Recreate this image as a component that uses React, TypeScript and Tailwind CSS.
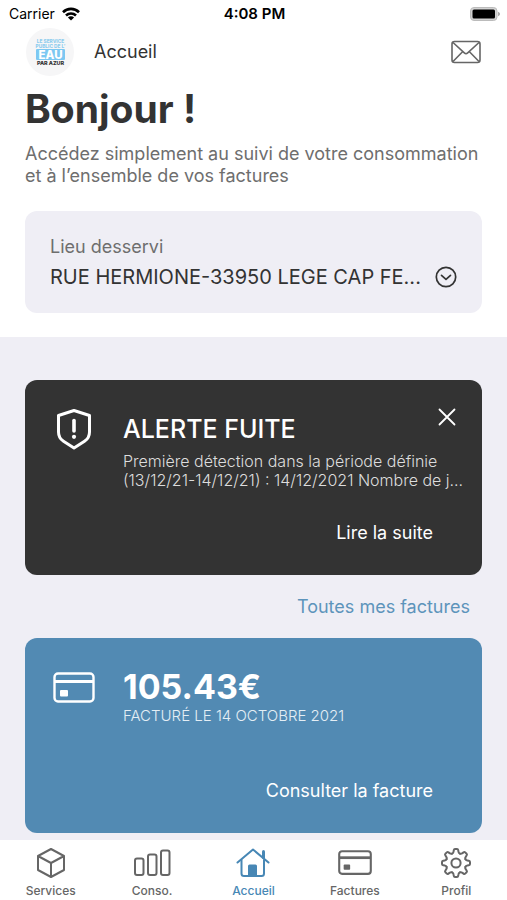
import type { ReactNode } from "react";

const WifiIcon = () => (
  <svg width="18" height="14" viewBox="0 0 18 14" fill="none" stroke="currentColor" strokeWidth="2.6" aria-hidden="true">
    <path d="M1 5.2a11.4 11.4 0 0 1 16 0" />
    <path d="M4 8.5a7.2 7.2 0 0 1 10 0" />
    <path d="M9 13.6 5.9 10.5a4.4 4.4 0 0 1 6.2 0Z" fill="currentColor" stroke="none" />
  </svg>
);

const BatteryIcon = () => (
  <svg width="30" height="14" viewBox="0 0 30 14" aria-hidden="true">
    <rect x="0.5" y="0.5" width="26.5" height="13" rx="3.5" fill="#d2d2d2" stroke="#bbb" />
    <rect x="2.5" y="2.5" width="22.5" height="9" rx="1.5" fill="#000" />
    <path d="M28 4.8c1.4.5 2 1.3 2 2.2s-.6 1.7-2 2.2z" fill="#aaa" />
  </svg>
);

const MailIcon = () => (
  <svg width="30" height="24" viewBox="0 0 30 24" fill="none" stroke="currentColor" strokeWidth="1.6" strokeLinejoin="round" aria-hidden="true">
    <rect x="1" y="1.5" width="28" height="21" rx="2.5" />
    <path d="m2 2.5 11.3 10.3q1.7 1.5 3.4 0L28 2.5M2 21.5l9.8-10M28 21.5l-9.8-10" />
  </svg>
);

const ChevronCircle = () => (
  <svg width="22" height="22" viewBox="0 0 22 22" fill="none" stroke="currentColor" strokeWidth="1.7" strokeLinecap="round" strokeLinejoin="round" aria-hidden="true">
    <circle cx="11" cy="11" r="9.7" />
    <path d="m6.5 9.3 4.5 4 4.5-4" />
  </svg>
);

const ShieldIcon = () => (
  <svg width="42" height="42" viewBox="0 0 42 42" fill="none" stroke="currentColor" strokeWidth="3" strokeLinejoin="round" aria-hidden="true">
    <path d="M21 2.5 36.5 7.5V24c0 4.5-1.5 7-5 9.3L21 40l-10.5-6.7C7 31 5.5 28.5 5.5 24V7.5Z" />
    <path d="M21 12.5v10.5" strokeWidth="3.6" strokeLinecap="round" />
    <circle cx="21" cy="28.8" r="2.1" fill="currentColor" stroke="none" />
  </svg>
);

const CloseIcon = () => (
  <svg width="18" height="18" viewBox="0 0 18 18" stroke="currentColor" strokeWidth="1.8" strokeLinecap="round" aria-hidden="true">
    <path d="m1.5 1.5 15 15M16.5 1.5l-15 15" />
  </svg>
);

const CardIcon = ({ className, line = 2.4 }: { className: string; line?: number }) => (
  <svg className={className} viewBox="0 0 42 31" fill="none" stroke="currentColor" strokeWidth={line} aria-hidden="true">
    <rect x="1.5" y="1.5" width="39" height="28" rx="3.5" />
    <path d="M2 9.5h38" strokeWidth={line + 0.8} />
    <rect x="7" y="18" width="8" height="6.5" rx="1" fill="currentColor" stroke="none" />
  </svg>
);

const CubeIcon = () => (
  <svg width="30" height="32" viewBox="0 0 30 32" fill="none" stroke="currentColor" strokeWidth="2" strokeLinejoin="round" aria-hidden="true">
    <path d="m15 2 13 7v14l-13 7-13-7V9ZM2 9l13 7 13-7M15 16v14" />
  </svg>
);

const BarsIcon = () => (
  <svg width="38" height="32" viewBox="0 0 38 32" fill="none" stroke="currentColor" strokeWidth="2" aria-hidden="true">
    <rect x="2" y="11.5" width="8.5" height="16.5" rx="2" />
    <rect x="15" y="7.5" width="8.5" height="20.5" rx="2" />
    <rect x="28" y="3.5" width="8.5" height="24.5" rx="2" />
  </svg>
);

const HomeIcon = () => (
  <svg width="36" height="32" viewBox="0 0 36 32" fill="none" stroke="currentColor" strokeWidth="2" strokeLinejoin="round" strokeLinecap="round" aria-hidden="true">
    <path d="M2.5 15.5 18 2.5l15.5 13" />
    <path d="M28.5 4.5v6" strokeWidth="3" />
    <path d="M6.5 13v13.5q0 2.5 2.5 2.5h17.5q2.5 0 2.5-2.5V13" />
    <path d="M13 29V19q0-1.5 1.5-1.5h6q1.5 0 1.5 1.5v10z" fill="currentColor" stroke="none" />
  </svg>
);

// one tooth, turned eight times around the hub
const GearIcon = () => (
  <svg width="32" height="32" viewBox="-16 -16 32 32" fill="none" stroke="currentColor" strokeWidth="2" strokeLinecap="round" aria-hidden="true">
    {[0, 45, 90, 135, 180, 225, 270, 315].map((angle) => (
      <path
        key={angle}
        transform={`rotate(${angle})`}
        d="M-3.9-9.4Q-2.7-9.9-2.5-11.2L-2.2-12.8Q-2-14-1-14H1Q2-14 2.2-12.8L2.5-11.2Q2.7-9.9 3.9-9.4"
      />
    ))}
    <circle r="4.6" />
  </svg>
);

const Logo = () => (
  <svg width="48" height="48" viewBox="0 0 48 48" fontFamily="Inter, sans-serif" fontWeight="800" textAnchor="middle" role="img" aria-label="Logo Eau">
    <circle cx="24" cy="24" r="24" fill="#f6f6f7" />
    <g fill="#8fcdee" fontSize="4.8">
      <text x="24.5" y="15">LE SERVICE</text>
      <text x="24.5" y="19.5">PUBLIC DE L'</text>
    </g>
    <rect x="10" y="21" width="29" height="11" rx="1" fill="#7cc8f2" />
    <text x="24.5" y="30.5" fill="#fff" fontSize="11.5">EAU</text>
    <text x="24.5" y="37" fill="#333" fontSize="5.4">PAR AZUR</text>
  </svg>
);

const tabs: { label: string; icon: ReactNode; active?: boolean }[] = [
  { label: "Services", icon: <CubeIcon /> },
  { label: "Conso.", icon: <BarsIcon /> },
  { label: "Accueil", icon: <HomeIcon />, active: true },
  { label: "Factures", icon: <CardIcon className="w-[34px]" line={2.6} /> },
  { label: "Profil", icon: <GearIcon /> },
];

export default function App() {
  return (
    <div className="flex min-h-screen flex-col bg-[#efeef5] font-['Inter',sans-serif] text-[#333]">
      <div className="bg-white pb-6">
        <div className="grid h-7 grid-cols-3 items-center pr-[7px] pl-[9px] text-sm text-black">
          <div className="flex items-center gap-[7px]">
            <span>Carrier</span>
            <WifiIcon />
          </div>
          <span className="text-center text-[15px] font-semibold">4:08 PM</span>
          <div className="flex justify-end">
            <BatteryIcon />
          </div>
        </div>

        <header className="flex items-center px-[26px]">
          <Logo />
          <span className="ml-5 text-lg">Accueil</span>
          <button aria-label="Messages" className="ml-auto text-[#666]">
            <MailIcon />
          </button>
        </header>

        <div className="px-[25px]">
          <h1 className="mt-3 text-[39px] leading-[42px] font-bold">Bonjour !</h1>
          <p className="mt-[13px] text-lg leading-[22px] text-[#6e6e6e]">
            Accédez simplement au suivi de votre consommation
            <br />
            et à l’ensemble de vos factures
          </p>

          <div className="mt-6 rounded-xl bg-[#efeef5] px-[25px] py-6">
            <label htmlFor="place" className="block text-lg leading-6 text-[#6e6e6e]">
              Lieu desservi
            </label>
            <div className="relative mt-1.5 flex items-center">
              <select id="place" className="w-full appearance-none truncate bg-transparent pr-8 text-xl leading-6">
                <option>RUE HERMIONE-33950 LEGE CAP FE...</option>
              </select>
              <span className="pointer-events-none absolute right-0">
                <ChevronCircle />
              </span>
            </div>
          </div>
        </div>
      </div>

      <main className="flex-1 px-[25px] pt-[43px]">
        <section className="flex min-h-[195px] flex-col rounded-xl bg-[#333] py-7 pr-[26px] pl-7 text-white">
          <div className="flex gap-7">
            <ShieldIcon />
            <div className="min-w-0 flex-1">
              <div className="flex justify-between">
                <h2 className="pt-1 text-[25px] leading-[34px] font-medium">ALERTE FUITE</h2>
                <button aria-label="Fermer" className="self-start">
                  <CloseIcon />
                </button>
              </div>
              <p className="mt-1.5 text-base leading-[19px] font-light whitespace-nowrap text-[#ddd]">
                Première détection dans la période définie
                <br />
                (13/12/21-14/12/21) : 14/12/2021 Nombre de j...
              </p>
            </div>
          </div>
          <button className="mt-auto mr-[23px] self-end text-lg leading-7">Lire la suite</button>
        </section>

        <div className="pt-[18px] pr-3 pb-[17px] text-right">
          <a href="#factures" className="block text-lg leading-7 text-[#5d94bb]">
            Toutes mes factures
          </a>
        </div>

        <section className="flex min-h-[195px] flex-col rounded-xl bg-[#528ab3] py-7 pr-[26px] pl-7 text-white">
          <div className="flex gap-7">
            <CardIcon className="mt-1.5 w-[42px] self-start" />
            <div className="pt-0.5">
              <h2 className="text-[34px] leading-[38px] font-bold">105.43€</h2>
              <p className="text-[15px] leading-[19px] font-light text-[#e4eef5]">FACTURÉ LE 14 OCTOBRE 2021</p>
            </div>
          </div>
          <button className="mt-auto mr-[23px] self-end text-lg leading-7">Consulter la facture</button>
        </section>
      </main>

      <nav className="mt-[7px] grid h-[60px] grid-cols-5 bg-white">
        {tabs.map((tab) => (
          <a
            key={tab.label}
            href="#"
            aria-current={tab.active ? "page" : undefined}
            className={`flex flex-col items-center pt-[7px] text-xs font-medium ${tab.active ? "text-[#4787b5]" : "text-[#666]"}`}
          >
            <span className="flex h-8 items-center">{tab.icon}</span>
            <span className="mt-1 leading-4">{tab.label}</span>
          </a>
        ))}
      </nav>
    </div>
  );
}
